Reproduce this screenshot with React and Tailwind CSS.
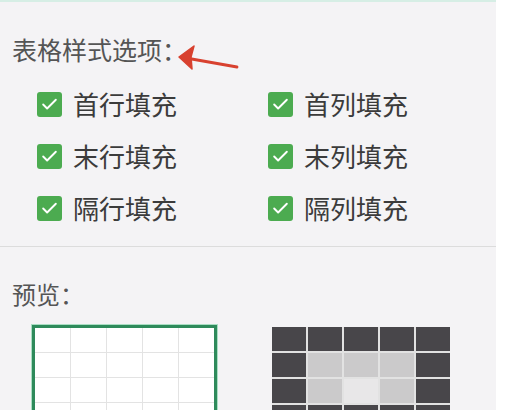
import { Check } from 'lucide-react'

const rows = [
    ['首行填充', '首列填充'],
    ['末行填充', '末列填充'],
    ['隔行填充', '隔列填充'],
]

function CheckItem({ label }) {
    return (
        <div className="flex items-center h-[52px] gap-[11px]">
            <div className="w-[25px] h-[25px] rounded-[3px] bg-[#4cab50] flex items-center justify-center">
                <Check className="w-[19px] h-[19px] text-white" strokeWidth={2.4} />
            </div>
            <span className="text-[26px] leading-none text-[#3b3b3b]">{label}</span>
        </div>
    )
}

// 0 = dark, 1 = light, 2 = lightest
const shaded = [
    [0, 0, 0, 0, 0],
    [0, 1, 1, 1, 0],
    [0, 1, 2, 1, 0],
    [0, 0, 0, 0, 0],
    [0, 0, 0, 0, 0],
]

export default function App() {
    return (
        <div className="w-[516px] h-[410px] bg-white flex font-['Noto_Sans_CJK_SC','Noto_Sans',sans-serif]">
            <div className="w-[496px] h-[410px] bg-[#f4f3f5] overflow-hidden border-t-2 border-[#d6eee5]">
                <div className="relative mt-[35px] pl-[12px] text-[25px] leading-[25px] text-[#555]">
                    表格样式选项：
                    <svg className="absolute left-[176px] top-[4px]" width="66" height="32" viewBox="0 0 66 32">
                        <path d="M61 26 L10 17" stroke="#d8412f" strokeWidth="2.8" strokeLinecap="round" fill="none" />
                        <path d="M3 16 L18 5 L15 16 L16 28 Z" fill="#d8412f" stroke="#d8412f" strokeWidth="1.5" strokeLinejoin="round" />
                    </svg>
                </div>

                <div className="grid grid-cols-[231px_231px] pl-[37px] mt-[16px]">
                    {rows.map(([a, b]) => (
                        <div key={a} className="contents">
                            <CheckItem label={a} />
                            <CheckItem label={b} />
                        </div>
                    ))}
                </div>

                <div className="mt-[12px] border-t border-[#dcdcdc]" />

                <div className="mt-[35px] pl-[12px] text-[24px] leading-[24px] text-[#555]">预览：</div>

                <div className="flex pl-[32px] mt-[19px] gap-[55px]">
                    <div className="w-[185px] border-[3px] border-[#2e8a5b] shadow-[0_0_0_1px_#a9dec3] bg-white">
                        <div className="grid grid-cols-5 gap-px bg-[#e3e3e3]">
                            {Array.from({ length: 25 }).map((_, i) => (
                                <div key={i} className="h-[24px] bg-white" />
                            ))}
                        </div>
                    </div>

                    <div className="w-[178px] mt-[2px] grid grid-cols-5 gap-[2px] bg-[#e2e2e2]">
                        {shaded.flat().map((v, i) => (
                            <div
                                key={i}
                                className={
                                    v === 0
                                        ? 'h-[24px] bg-[#48464a]'
                                        : v === 1
                                          ? 'h-[24px] bg-[#cbcacb]'
                                          : 'h-[24px] bg-[#e8e7e8]'
                                }
                            />
                        ))}
                    </div>
                </div>
            </div>
        </div>
    )
}
